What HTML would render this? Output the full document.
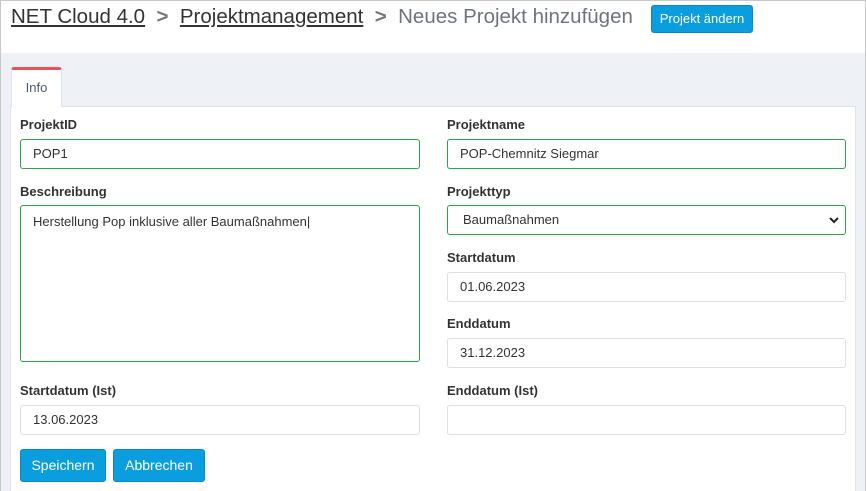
<!DOCTYPE html>
<html style="width:866px;height:491px;overflow:hidden"><head><style>
*{box-sizing:border-box;margin:0;padding:0}
body{width:866px;height:491px;overflow:hidden;font-family:"Liberation Sans",sans-serif;background:#fff;position:relative}
.frame{position:absolute;left:0;top:0;width:866px;height:491px;border:1px solid #c8c8c8;border-bottom:none;z-index:5;pointer-events:none}
.gray{position:absolute;left:1px;top:53px;width:864px;height:438px;background:#eef1f5}
.bc{position:absolute;top:5px;font-size:20.5px;color:#333;white-space:nowrap}
.bc u{text-decoration:underline}
.sep{color:#777;font-weight:bold}
.btn{position:absolute;background:#0a9ede;color:#fff;border:1px solid #0888c4;border-radius:3px;font-size:13px;text-align:center}
.panel{position:absolute;left:10px;top:106px;width:846px;height:385px;background:#fff;border:1px solid #dde2e8;border-bottom:none}
.tab{position:absolute;left:11px;top:67px;width:51px;height:40px;background:#fff;border:1px solid #dde2e8;border-top:3px solid #e8505b;border-bottom:none;font-size:13px;color:#4a5a70;text-align:center;line-height:36px;z-index:2;border-radius:3px 3px 0 0}
.lbl{position:absolute;font-size:13px;font-weight:bold;color:#333}
.in{position:absolute;height:30px;border:1px solid #dcdfe3;border-radius:3px;font-size:13px;color:#333;padding-left:12px;line-height:28px;background:#fff}
.ok{border-color:#28a745}
</style></head><body>
<div class="gray"></div>
<div class="frame"></div>
<div class="bc" style="left:11px"><u>NET Cloud 4.0</u> <span class="sep">&nbsp;&gt;&nbsp;</span> <u>Projektmanagement</u> <span class="sep">&nbsp;&gt;&nbsp;</span> <span style="color:#6c757d">Neues Projekt hinzufügen</span></div>
<div class="btn" style="left:651px;top:5px;width:102px;height:28px;line-height:26px">Projekt ändern</div>
<div class="tab">Info</div>
<div class="panel"></div>
<div class="lbl" style="left:20px;top:117px">ProjektID</div>
<div class="in ok" style="left:20px;top:139px;width:400px">POP1</div>
<div class="lbl" style="left:447px;top:117px">Projektname</div>
<div class="in ok" style="left:447px;top:139px;width:399px">POP-Chemnitz Siegmar</div>
<div class="lbl" style="left:20px;top:184px">Beschreibung</div>
<div class="in ok" style="left:20px;top:205px;width:400px;height:157px;line-height:normal;padding-top:8px">Herstellung Pop inklusive aller Baumaßnahmen|</div>
<div class="lbl" style="left:447px;top:184px">Projekttyp</div>
<div class="in ok" style="left:447px;top:205px;width:399px;padding-left:15px">Baumaßnahmen<svg style="position:absolute;right:6px;top:10px" width="10" height="8" viewBox="0 0 10 8"><path d="M1 2 L5 6 L9 2" stroke="#222" stroke-width="2" fill="none"/></svg></div>
<div class="lbl" style="left:447px;top:250px">Startdatum</div>
<div class="in" style="left:447px;top:272px;width:399px">01.06.2023</div>
<div class="lbl" style="left:447px;top:316px">Enddatum</div>
<div class="in" style="left:447px;top:338px;width:399px">31.12.2023</div>
<div class="lbl" style="left:20px;top:383px">Startdatum (Ist)</div>
<div class="in" style="left:20px;top:405px;width:400px">13.06.2023</div>
<div class="lbl" style="left:447px;top:383px">Enddatum (Ist)</div>
<div class="in" style="left:447px;top:405px;width:399px"></div>
<div class="btn" style="left:20px;top:449px;width:86px;height:33px;line-height:31px;font-size:14px">Speichern</div>
<div class="btn" style="left:113px;top:449px;width:92px;height:33px;line-height:31px;font-size:14px">Abbrechen</div>
</body></html>
